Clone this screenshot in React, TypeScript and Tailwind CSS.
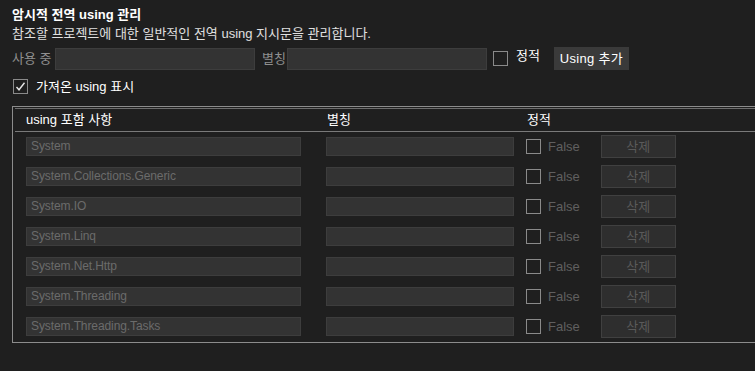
import React from "react";

const usings = [
  "System",
  "System.Collections.Generic",
  "System.IO",
  "System.Linq",
  "System.Net.Http",
  "System.Threading",
  "System.Threading.Tasks",
];

function Box({ checked }: { checked?: boolean }) {
  return (
    <span className="w-[15px] h-[15px] border border-[#8a8a8a] flex items-center justify-center shrink-0">
      {checked && (
        <svg width="11" height="11" viewBox="0 0 11 11">
          <path d="M1.5 6 L4 8.8 L9.5 1.8" fill="none" stroke="#e6e6e6" strokeWidth="1.4" />
        </svg>
      )}
    </span>
  );
}

function UsingRow({ name }: { name: string }) {
  return (
    <div className="h-[30px] flex items-center">
      <div className="ml-[11px] w-[275px] h-[19px] bg-[#333333] border border-[#3d3d3d] text-[#6b6b6b] text-[12px] tracking-[-0.1px] leading-[17px] px-[4px]">
        {name}
      </div>
      <div className="ml-[25px] w-[188px] h-[19px] bg-[#333333] border border-[#3d3d3d]" />
      <div className="ml-[12px] flex items-center gap-[7px]">
        <Box />
        <span className="text-[#5f5f5f] text-[13px]">False</span>
      </div>
      <button className="ml-[21px] w-[75px] h-[23px] bg-[#2e2e2e] border border-[#404040] text-[#5a5a5a] text-[13px]">
        삭제
      </button>
    </div>
  );
}

export default function App() {
  return (
    <div
      className="w-[755px] h-[371px] bg-[#1f1f1f] text-[#dcdcdc] overflow-hidden pl-[12px] pt-[5px]"
      style={{ fontFamily: '"Liberation Sans", "Noto Sans CJK KR", sans-serif' }}
    >
      <div className="text-[13px] font-bold text-white leading-[19px]">암시적 전역 using 관리</div>
      <div className="text-[13px] leading-[17px] mt-[1px] text-[#e0e0e0]">
        참조할 프로젝트에 대한 일반적인 전역 using 지시문을 관리합니다.
      </div>

      <div className="flex items-center mt-[5px] text-[13px]">
        <span className="text-[#8f8f8f] w-[43px]">사용 중</span>
        <div className="w-[200px] h-[22px] bg-[#333333] border border-[#3d3d3d]" />
        <span className="text-[#8f8f8f] ml-[7px] w-[25px]">별칭</span>
        <div className="w-[200px] h-[22px] bg-[#333333] border border-[#3d3d3d]" />
        <span className="ml-[6px]">
          <Box />
        </span>
        <span className="ml-[8px] text-white -mt-[6px]">정적</span>
        <button className="ml-[14px] w-[75px] h-[23px] bg-[#3a3a3a] text-white text-[13px] tracking-[0.3px]">
          Using 추가
        </button>
      </div>

      <div className="flex items-center gap-[8px] mt-[7px] ml-[1px] text-[13px] text-white">
        <Box checked />
        <span>가져온 using 표시</span>
      </div>

      <div className="mt-[9px] w-[760px] h-[237px] border-l border-t border-b border-[#8c8c8c] pl-[2px] pt-[1px]">
        <div className="border-t border-[#6e6e6e] h-[24px] flex items-center text-[13px] text-white border-b border-b-[#7a7a7a]">
          <span className="ml-[11px] w-[301px]">using 포함 사항</span>
          <span className="w-[200px]">별칭</span>
          <span>정적</span>
        </div>
        <div>
          {usings.map((u) => (
            <UsingRow key={u} name={u} />
          ))}
        </div>
      </div>
    </div>
  );
}
